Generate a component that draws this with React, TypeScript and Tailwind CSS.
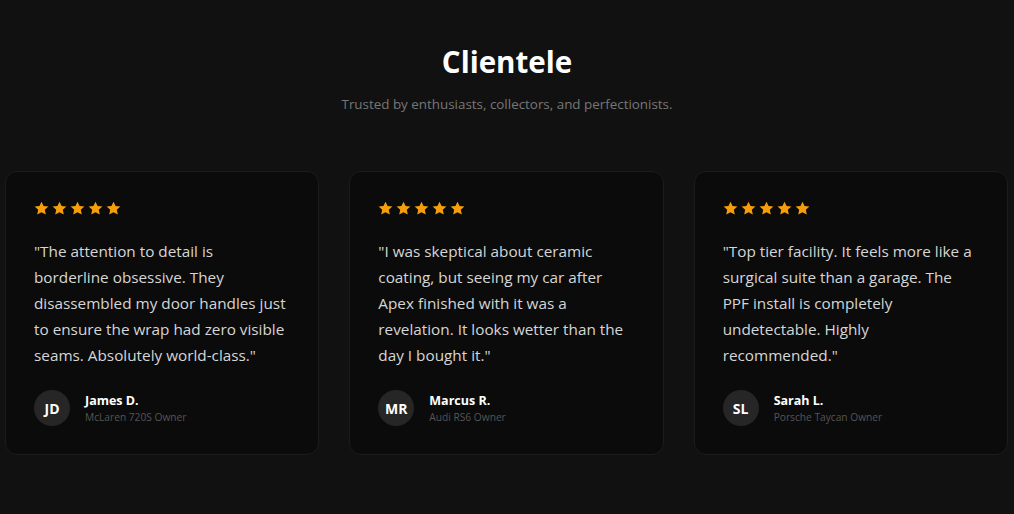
import React from "react";

interface Review {
  quote: string;
  name: string;
  initials: string;
  car: string;
}

const reviews: Review[] = [
  {
    quote:
      "\"The attention to detail is borderline obsessive. They disassembled my door handles just to ensure the wrap had zero visible seams. Absolutely world-class.\"",
    name: "James D.",
    initials: "JD",
    car: "McLaren 720S Owner",
  },
  {
    quote:
      "\"I was skeptical about ceramic coating, but seeing my car after Apex finished with it was a revelation. It looks wetter than the day I bought it.\"",
    name: "Marcus R.",
    initials: "MR",
    car: "Audi RS6 Owner",
  },
  {
    quote:
      "\"Top tier facility. It feels more like a surgical suite than a garage. The PPF install is completely undetectable. Highly recommended.\"",
    name: "Sarah L.",
    initials: "SL",
    car: "Porsche Taycan Owner",
  },
];

function Star() {
  return (
    <svg width="15" height="15" viewBox="0 0 24 24" fill="#f59e0b">
      <path d="M12 1l3.3 7 7.7.9-5.7 5.2 1.6 7.6L12 17.9l-6.9 3.8 1.6-7.6L1 8.9 8.7 8z" />
    </svg>
  );
}

function Card({ item }: { item: Review }) {
  return (
    <div className="flex h-[284px] flex-col rounded-xl border border-[#1c1c1c] bg-[#0b0b0b] px-7 pt-[29px] pb-7">
      <div className="flex gap-[3px]">
        {[0, 1, 2, 3, 4].map((i) => (
          <Star key={i} />
        ))}
      </div>
      <p className="mt-[22px] text-[15.3px] leading-[26px] text-[#d6d6d6]">{item.quote}</p>
      <div className="mt-auto flex items-center gap-[15px]">
        <div className="flex h-9 w-9 items-center justify-center rounded-full bg-[#262626] text-[14px] font-bold text-white">
          {item.initials}
        </div>
        <div className="flex flex-col pt-[2px]">
          <span className="text-[12.5px] font-bold leading-4 text-white">{item.name}</span>
          <span className="text-[10.2px] leading-4 text-[#555555]">{item.car}</span>
        </div>
      </div>
    </div>
  );
}

export default function App() {
  return (
    <div
      className="min-h-[514px] w-full bg-[#111111] pt-[40px]"
      style={{ fontFamily: '"Open Sans", "Noto Sans", sans-serif' }}
    >
      <h2 className="text-center text-[29.5px] font-bold leading-[44px] text-white">Clientele</h2>
      <p className="mt-[10px] text-center text-[13.4px] text-[#777777]">
        Trusted by enthusiasts, collectors, and perfectionists.
      </p>
      <div className="mt-[57px] grid grid-cols-3 gap-[30px] pl-[5px] pr-[6px]">
        {reviews.map((r) => (
          <Card key={r.name} item={r} />
        ))}
      </div>
    </div>
  );
}
